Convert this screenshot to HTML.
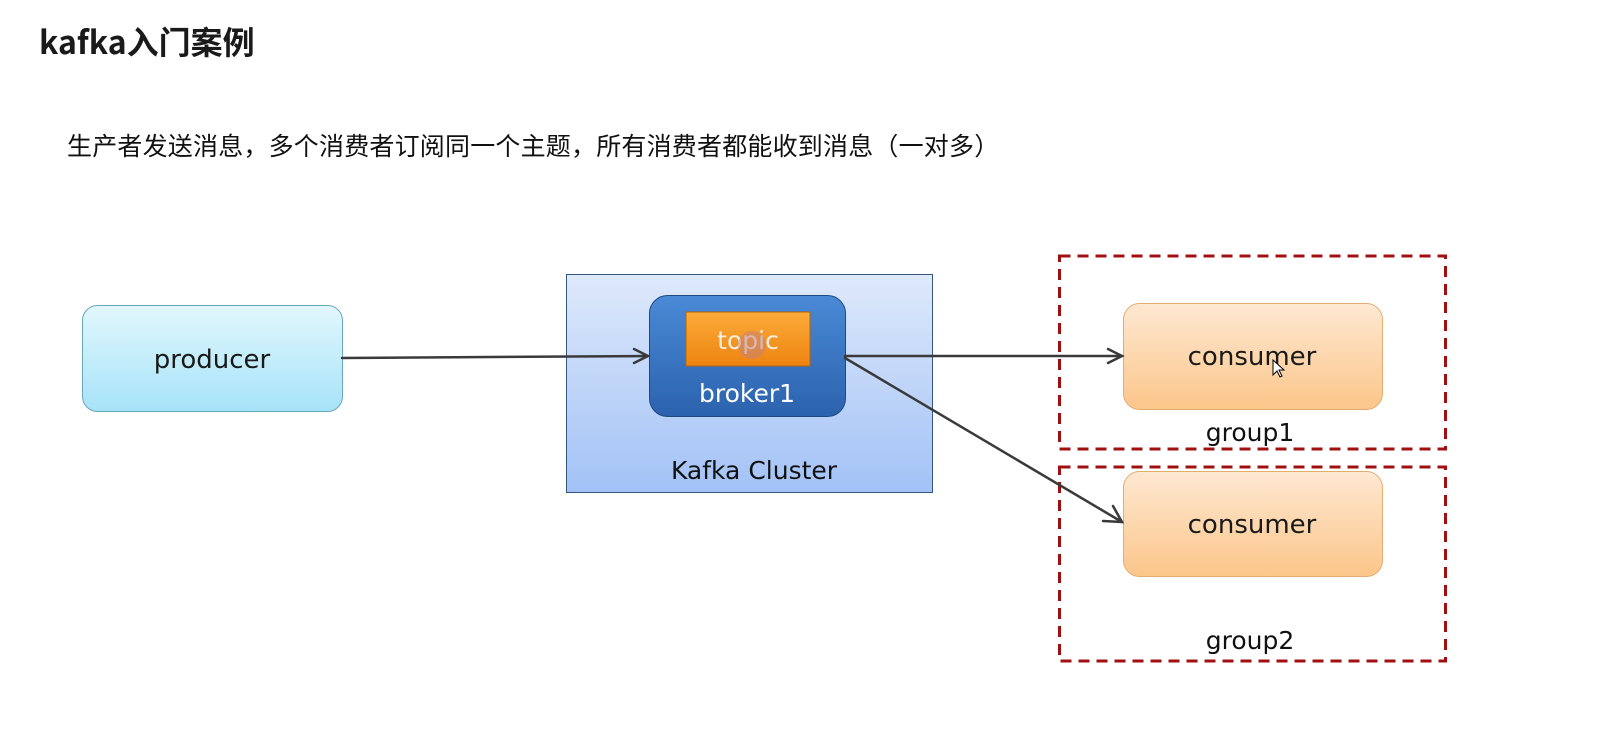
<!DOCTYPE html>
<html><head><meta charset="utf-8"><style>
html,body{margin:0;padding:0;background:#fff;width:1612px;height:733px;overflow:hidden;position:relative;font-family:"Liberation Sans","Noto Sans CJK SC",sans-serif}
.t{position:absolute;left:39px;top:19px;font-size:32px;font-weight:bold;color:#1a1a1a;letter-spacing:0px;font-family:"Noto Sans CJK SC",sans-serif;line-height:44px}
.s{position:absolute;left:67px;top:127px;font-size:25px;color:#111;letter-spacing:0.2px;white-space:nowrap;font-family:"Noto Sans CJK SC",sans-serif;line-height:36px}
svg{position:absolute;left:0;top:0}
svg text{font-family:"DejaVu Sans","Liberation Sans",sans-serif}
</style></head><body>
<div class="t">kafka入门案例</div>
<div class="s">生产者发送消息，多个消费者订阅同一个主题，所有消费者都能收到消息（一对多）</div>
<svg width="1612" height="733" viewBox="0 0 1612 733">
<defs>
<linearGradient id="gp" x1="0" y1="0" x2="0" y2="1"><stop offset="0" stop-color="#e2f7fd"/><stop offset="1" stop-color="#a6e3f8"/></linearGradient>
<linearGradient id="gk" x1="0" y1="0" x2="0" y2="1"><stop offset="0" stop-color="#dee9fb"/><stop offset="1" stop-color="#a2c2f6"/></linearGradient>
<linearGradient id="gb" x1="0" y1="0" x2="0" y2="1"><stop offset="0" stop-color="#4a8ad6"/><stop offset="1" stop-color="#2b62ad"/></linearGradient>
<linearGradient id="gt" x1="0" y1="0" x2="0" y2="1"><stop offset="0" stop-color="#fbab3a"/><stop offset="1" stop-color="#ee8410"/></linearGradient>
<linearGradient id="gc" x1="0" y1="0" x2="0" y2="1"><stop offset="0" stop-color="#fee8d2"/><stop offset="1" stop-color="#fcc68a"/></linearGradient>
</defs>
<rect x="82.5" y="305.5" width="260" height="106" rx="15" fill="url(#gp)" stroke="#6aa8b8"/>
<text x="212" y="368" font-size="26" text-anchor="middle" fill="#1a1a1a">producer</text>
<rect x="566.5" y="274.5" width="366" height="218" fill="url(#gk)" stroke="#36587e"/>
<text x="754" y="479" font-size="25" text-anchor="middle" fill="#111">Kafka Cluster</text>
<rect x="649.5" y="295.5" width="196" height="121" rx="18" fill="url(#gb)" stroke="#1f4a80"/>
<rect x="686" y="312" width="124" height="54" fill="url(#gt)" stroke="#b86408"/>
<text x="748" y="349" font-size="25" text-anchor="middle" fill="#f4eee0">topic</text>
<circle cx="752" cy="345" r="14" fill="#c08080" opacity="0.5"/>
<text x="747" y="402" font-size="25" text-anchor="middle" fill="#fff">broker1</text>
<rect x="1123.5" y="303.5" width="259" height="106" rx="16" fill="url(#gc)" stroke="#e3ac70"/>
<text x="1252" y="365" font-size="26" text-anchor="middle" fill="#1a1a1a">consumer</text>
<rect x="1123.5" y="471.5" width="259" height="105" rx="16" fill="url(#gc)" stroke="#e3ac70"/>
<text x="1252" y="533" font-size="26" text-anchor="middle" fill="#1a1a1a">consumer</text>
<text x="1250" y="441" font-size="25" text-anchor="middle" fill="#111">group1</text>
<text x="1250" y="649" font-size="25" text-anchor="middle" fill="#111">group2</text>
<rect x="1059.5" y="256" width="386" height="193" fill="none" stroke="#a01010" stroke-width="3" stroke-dasharray="11,7"/>
<rect x="1059.5" y="467" width="386" height="194" fill="none" stroke="#a01010" stroke-width="3" stroke-dasharray="11,7"/>
<g stroke="#3a3a3a" stroke-width="2.5" fill="none" stroke-linecap="round">
<line x1="342" y1="358" x2="648" y2="356"/><polyline points="634,349 648,356 634,363"/>
<line x1="845" y1="356" x2="1122" y2="356"/><polyline points="1108,349 1122,356 1108,363"/>
<line x1="845" y1="358" x2="1122" y2="522"/><polyline points="1103,521 1122,522 1113,506"/>
</g>
<path d="M1273 360 l0 15 l4 -4 l3 6 l2 -1 l-3 -6 l5 0 z" fill="#fff" stroke="#000" stroke-width="1"/>
</svg>
</body></html>
